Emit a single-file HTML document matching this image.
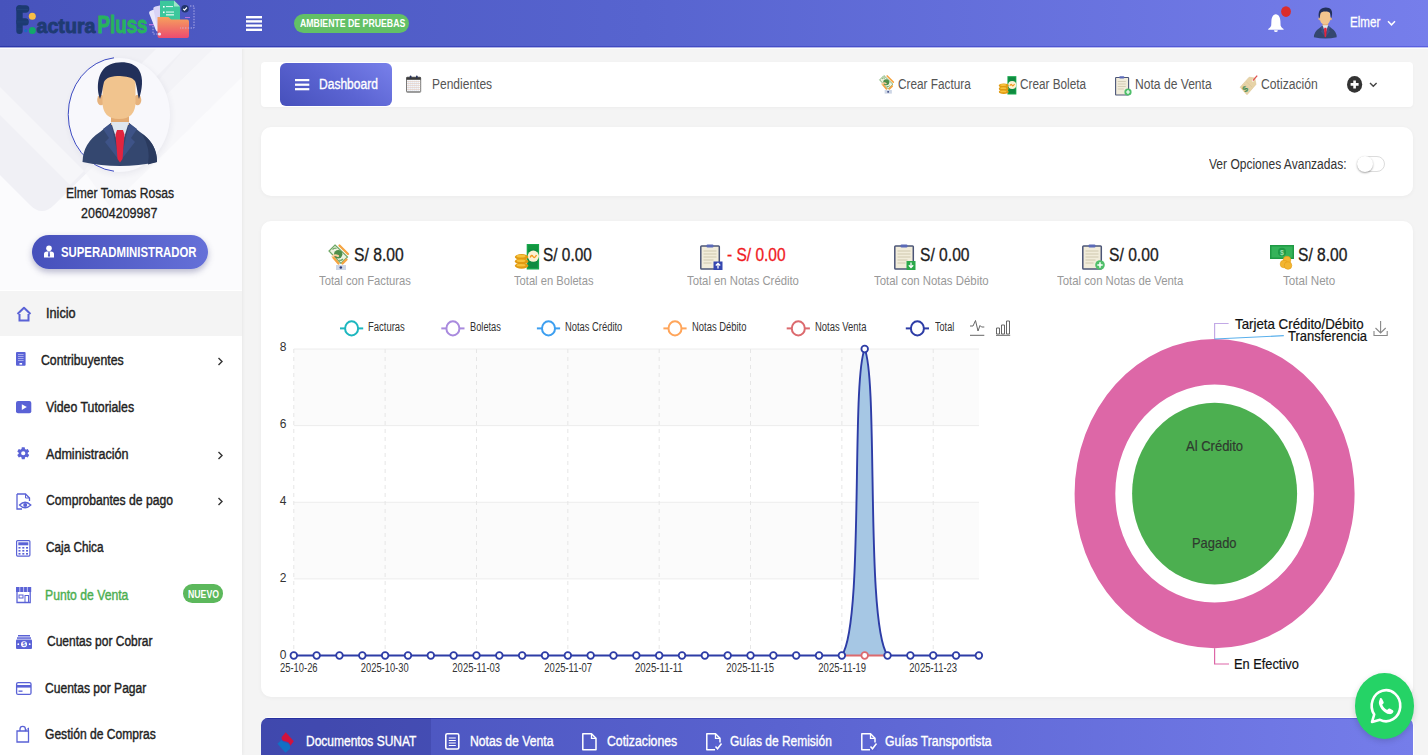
<!DOCTYPE html><html><head><meta charset="utf-8"><style>*{box-sizing:border-box;margin:0;padding:0}
html,body{width:1428px;height:755px;overflow:hidden}
body{position:relative;background:#f4f4f4;font-family:"Liberation Sans",sans-serif;color:#333}
.abs{position:absolute}
.t{position:absolute;white-space:nowrap}
svg{position:absolute;overflow:visible}
</style></head><body>
<div class="abs" style="left:0;top:0;width:1428px;height:46px;background:linear-gradient(90deg,#4753bc 0%,#5764cf 45%,#767eeb 100%)"></div>
<svg style="left:14px;top:0" width="184" height="40" viewBox="0 0 184 40">
  <rect x="2.3" y="5.3" width="6.4" height="28.7" rx="3" fill="#1c3a72"/>
  <rect x="2.3" y="5.3" width="13" height="7.4" rx="3.6" fill="#1c3a72"/>
  <rect x="2.3" y="18.3" width="12.5" height="7.2" rx="3.5" fill="#1c3a72"/>
  <path d="M3 9.5h11M3 22h11M3 29h5" stroke="#24437e" stroke-width="0.8"/>
  <circle cx="18.3" cy="16.2" r="3.5" fill="#f8bd45"/>
  <circle cx="11.8" cy="30.7" r="1.6" fill="#1a6ac0"/>
  <circle cx="18.3" cy="30.6" r="3.5" fill="#12a86a"/>
  <text x="22.5" y="32.6" font-family="Liberation Sans" font-weight="bold" font-size="21" fill="#1f3b73" stroke="#1f3b73" stroke-width="0.9" textLength="59" lengthAdjust="spacingAndGlyphs">actura</text>
  <text x="83.5" y="32.6" font-family="Liberation Sans" font-weight="bold" font-size="24.5" fill="#27b35e" stroke="#27b35e" stroke-width="0.9" textLength="50" lengthAdjust="spacingAndGlyphs">Pluss</text>
  <rect x="135" y="24" width="7" height="1.3" fill="#b873e0"/>
  <rect x="138" y="8" width="16" height="22" rx="2.5" fill="#e9e6fb" transform="rotate(-22 146 19)"/>
  <rect x="141" y="5" width="16" height="22" rx="2.5" fill="#d9d3f6" transform="rotate(-12 149 16)"/>
  <path d="M146 0.5 h14 l6 6 v14 h-20z" fill="#3cc79c"/>
  <path d="M160 0.5 v6 h6z" fill="#9fe3c8"/>
  <rect x="149" y="6" width="1.6" height="1.6" fill="#fff"/><rect x="152" y="6" width="7" height="1.1" fill="#d6f5ec"/>
  <rect x="149" y="11.5" width="1.6" height="1.6" fill="#fff"/><rect x="152" y="11.5" width="8" height="1.1" fill="#d6f5ec"/><rect x="152" y="14" width="8" height="1.6" fill="#bfeede"/>
  <defs><linearGradient id="fold" x1="0" y1="0" x2="0" y2="1"><stop offset="0" stop-color="#f6a15c"/><stop offset="1" stop-color="#ec4b70"/></linearGradient></defs>
  <path d="M143.5 17 h11 l2.5 2.5 h16 a2 2 0 0 1 2 2 v14.5 a2 2 0 0 1 -2 2 h-27.5 a2 2 0 0 1 -2 -2z" fill="url(#fold)"/>
  <circle cx="171" cy="8.7" r="3.8" fill="#22356b"/>
  <path d="M169.2 8.8 l1.3 1.4 l2.4 -2.7" stroke="#fff" stroke-width="1.2" fill="none"/>
  <path d="M176 6 h4 v22 h-14" stroke="#c9c3f0" stroke-width="0.8" stroke-dasharray="1.4 1.4" fill="none"/>
  <path d="M139 26 v8 h6" stroke="#c9c3f0" stroke-width="0.8" stroke-dasharray="1.4 1.4" fill="none"/>
  <circle cx="145.5" cy="34" r="1.6" fill="#e8e5fb"/>
  <rect x="171" y="17" width="5" height="1" fill="#b873e0"/>
 </svg>
<svg style="left:246px;top:15.8px" width="16" height="16"><rect y="0" width="16" height="2.4" fill="#fff"/><rect y="4.2" width="16" height="2.4" fill="#fff"/><rect y="8.4" width="16" height="2.4" fill="#fff"/><rect y="12.6" width="16" height="2.4" fill="#fff"/></svg>
<div class="abs" style="left:294px;top:14px;width:115px;height:19px;border-radius:10px;background:#62c066"></div>
<div class="t" style="left:299.50px;top:18.41px;font-size:10.5px;line-height:10.5px;color:#fff;font-weight:bold;transform:scaleX(0.8318);transform-origin:0 0;">AMBIENTE DE PRUEBAS</div>
<svg style="left:0;top:0" width="1428" height="47" viewBox="0 0 1428 47"><path d="M1275.8 14.2 C1272.8 14.5 1271.6 17.5 1271.4 21 L1271.2 25.5 C1270.8 27 1269.5 28.2 1268.2 29 L1268.2 29.8 H1283.6 L1283.6 29 C1282.2 28.2 1281 27 1280.6 25.5 L1280.4 21 C1280.2 17.5 1279 14.5 1275.8 14.2Z" fill="#fff"/><path d="M1274 30.2 a1.9 1.9 0 0 0 3.8 0z" fill="#fff"/><ellipse cx="1286" cy="11.6" rx="4.9" ry="5.3" fill="#dc2c2a"/></svg>
<svg style="left:0;top:0" width="1428" height="47" viewBox="0 0 1428 47"><g transform="translate(1307.015 3.875) scale(0.306 0.298)"><path d="M22.5 112 Q23 93 40 82 L51 73 L69 73 L80 82 Q97 93 97 112 Q60 120 22.5 112Z" fill="#34476f"/><path d="M51 73 L43 79 L49 88 L45 92 L59 110 Z" fill="#3e5387"/><path d="M69 73 L77 79 L71 88 L75 92 L61 110 Z" fill="#3e5387"/><rect x="51" y="58" width="18" height="17" fill="#e2aa72"/><path d="M51 72 L69 72 L60 100 Z" fill="#dfe7ef"/><path d="M57 80 L63 80 L64.5 84.5 L62.5 109 L60 112.5 L57.5 109 L55.5 84.5 Z" fill="#e2243f"/><ellipse cx="41" cy="50" rx="3.8" ry="5.2" fill="#e6b27c"/><ellipse cx="77.5" cy="50" rx="3.8" ry="5.2" fill="#e6b27c"/><path d="M42.5 32 Q42.5 20 59 20 Q75.5 20 75.5 32 L75.5 52 Q75.5 69 59 69 Q42.5 69 42.5 52 Z" fill="#f1c48e"/><path d="M40 49 C36 38 37 20 50 14.5 C60 10.5 74 12 79 20 C84 28 82 40 79 49 C77.5 44 77 36 75 31 C72 27 66 26.5 60 26 C52 26 46 27.5 44 32 C42.5 37 42.3 44 40 49Z" fill="#22305a"/></g></svg>
<div class="t" style="left:1349.70px;top:15.45px;font-size:14px;line-height:14px;color:#fff;transform:scaleX(0.8288);transform-origin:0 0;-webkit-text-stroke:0.3px #fff;">Elmer</div>
<svg style="left:1387px;top:20px" width="9" height="7"><path d="M1 1.2 L4.5 4.8 L8 1.2" stroke="#fff" stroke-width="1.5" fill="none"/></svg>
<div class="abs" style="left:0;top:47px;width:242px;height:708px;background:#fff;box-shadow:1px 0 3px rgba(0,0,0,0.05)"></div>
<svg style="left:0;top:47px" width="242" height="243" viewBox="0 0 242 243">
  <rect width="242" height="243" fill="#fbfbfd"/>
  <path d="M0 0 H215 L54 158 Q42 170 30 158 L0 128 Z" fill="#f0f0f5"/>
  <path d="M0 40 L84 124 L70 138 L0 68 Z" fill="#f6f6f9"/>
  <path d="M158 0 H186 L84 102 L70 88 Z" fill="#f6f6fa"/>
  <path d="M186 0 H242 V30 L110 160 L84 124 Z" fill="#f5f5f9" opacity="0.6"/>
 </svg>
<div class="abs" style="left:68.4px;top:57.5px;width:102px;height:114px;border-radius:50%;background:#f8f8fc;box-shadow:1px 2px 6px rgba(40,40,90,0.07)"></div>
<svg style="left:60px;top:50px" width="120" height="130" viewBox="0 0 120 130">
  
  <path d="M54 7.8 A51 57 0 0 0 54 121.2" stroke="#3d4bc2" stroke-width="1" fill="none"/>
  <path d="M22.5 112 Q23 93 40 82 L51 73 L69 73 L80 82 Q97 93 97 112 Q60 120 22.5 112Z" fill="#34476f"/>
  <path d="M51 73 L43 79 L49 88 L45 92 L59 110 Z" fill="#3e5387"/>
  <path d="M69 73 L77 79 L71 88 L75 92 L61 110 Z" fill="#3e5387"/>
  <path d="M82 84 Q97 94 97 112 L88 114.5 Q91 98 82 84Z" fill="#2a3a5e"/>
  <rect x="51" y="58" width="18" height="17" fill="#e2aa72"/>
  <path d="M51 72 L69 72 L60 100 Z" fill="#dfe7ef"/>
  <path d="M57 80 L63 80 L64.5 84.5 L62.5 109 L60 112.5 L57.5 109 L55.5 84.5 Z" fill="#e2243f"/>
  <ellipse cx="41" cy="50" rx="3.8" ry="5.2" fill="#e6b27c"/>
  <ellipse cx="77.5" cy="50" rx="3.8" ry="5.2" fill="#e6b27c"/>
  <path d="M42.5 32 Q42.5 20 59 20 Q75.5 20 75.5 32 L75.5 52 Q75.5 69 59 69 Q42.5 69 42.5 52 Z" fill="#f1c48e"/>
  <path d="M40 49 C36 38 37 20 50 14.5 C60 10.5 74 12 79 20 C84 28 82 40 79 49 C77.5 44 77 36 75 31 C72 27 66 26.5 60 26 C52 26 46 27.5 44 32 C42.5 37 42.3 44 40 49Z" fill="#22305a"/>
 </svg>
<div class="t" style="left:65.80px;top:185.85px;font-size:14px;line-height:14px;color:#222;transform:scaleX(0.8648);transform-origin:0 0;-webkit-text-stroke:0.3px #222;">Elmer Tomas Rosas</div>
<div class="t" style="left:81.30px;top:206.45px;font-size:14px;line-height:14px;color:#222;transform:scaleX(0.8920);transform-origin:0 0;-webkit-text-stroke:0.3px #222;">20604209987</div>
<div class="abs" style="left:32px;top:235px;width:176px;height:34px;border-radius:17px;background:linear-gradient(90deg,#4650bb,#6570d8);box-shadow:0 3px 6px rgba(60,60,120,0.35)"></div>
<svg style="left:43px;top:245px" width="12" height="13" viewBox="0 0 12 13"><circle cx="6" cy="3.2" r="2.8" fill="#fff"/><path d="M1 12.5 V9 Q1 6.5 4 6.5 H8 Q11 6.5 11 9 V12.5Z" fill="#fff"/><path d="M5.3 7 h1.4 l0.4 4 l-1.1 1 l-1.1 -1z" fill="#5560c8"/></svg>
<div class="t" style="left:60.60px;top:245.05px;font-size:14px;line-height:14px;color:#fff;font-weight:bold;transform:scaleX(0.8103);transform-origin:0 0;">SUPERADMINISTRADOR</div>
<div class="abs" style="left:0;top:290.5px;width:242px;height:45.5px;background:#f4f4f4"></div>
<div class="t" style="left:45.50px;top:306.35px;font-size:14px;line-height:14px;color:#222;transform:scaleX(0.9057);transform-origin:0 0;-webkit-text-stroke:0.4px #222;">Inicio</div>
<div class="t" style="left:40.80px;top:353.15px;font-size:14px;line-height:14px;color:#222;transform:scaleX(0.8772);transform-origin:0 0;-webkit-text-stroke:0.4px #222;">Contribuyentes</div>
<div class="t" style="left:45.50px;top:400.05px;font-size:14px;line-height:14px;color:#222;transform:scaleX(0.8797);transform-origin:0 0;-webkit-text-stroke:0.4px #222;">Video Tutoriales</div>
<div class="t" style="left:45.50px;top:446.95px;font-size:14px;line-height:14px;color:#222;transform:scaleX(0.8985);transform-origin:0 0;-webkit-text-stroke:0.4px #222;">Administración</div>
<div class="t" style="left:45.50px;top:493.25px;font-size:14px;line-height:14px;color:#222;transform:scaleX(0.8679);transform-origin:0 0;-webkit-text-stroke:0.4px #222;">Comprobantes de pago</div>
<div class="t" style="left:45.50px;top:539.65px;font-size:14px;line-height:14px;color:#222;transform:scaleX(0.8397);transform-origin:0 0;-webkit-text-stroke:0.4px #222;">Caja Chica</div>
<div class="t" style="left:45.30px;top:587.55px;font-size:14px;line-height:14px;color:#4cae50;transform:scaleX(0.8710);transform-origin:0 0;-webkit-text-stroke:0.4px #4cae50;">Punto de Venta</div>
<div class="t" style="left:46.60px;top:634.15px;font-size:14px;line-height:14px;color:#222;transform:scaleX(0.8572);transform-origin:0 0;-webkit-text-stroke:0.4px #222;">Cuentas por Cobrar</div>
<div class="t" style="left:45.30px;top:680.65px;font-size:14px;line-height:14px;color:#222;transform:scaleX(0.8620);transform-origin:0 0;-webkit-text-stroke:0.4px #222;">Cuentas por Pagar</div>
<div class="t" style="left:45.30px;top:727.15px;font-size:14px;line-height:14px;color:#222;transform:scaleX(0.8622);transform-origin:0 0;-webkit-text-stroke:0.4px #222;">Gestión de Compras</div>
<svg style="left:217px;top:357.0px" width="7" height="9"><path d="M1.5 1 L5 4.5 L1.5 8" stroke="#333" stroke-width="1.4" fill="none"/></svg>
<svg style="left:217px;top:450.8px" width="7" height="9"><path d="M1.5 1 L5 4.5 L1.5 8" stroke="#333" stroke-width="1.4" fill="none"/></svg>
<svg style="left:217px;top:497.1px" width="7" height="9"><path d="M1.5 1 L5 4.5 L1.5 8" stroke="#333" stroke-width="1.4" fill="none"/></svg>
<svg style="left:15.5px;top:306px" width="16" height="16" viewBox="0 0 16 16"><path d="M1.5 8 L8 1.8 L14.5 8" stroke="#5a62d6" stroke-width="2" fill="none" stroke-linejoin="round"/><path d="M3.5 8 V14.5 H12.5 V8" stroke="#5a62d6" stroke-width="2" fill="none"/></svg>
<svg style="left:15.8px;top:352px" width="10" height="14" viewBox="0 0 10 14"><rect x="0" y="0" width="9.6" height="13.7" rx="1" fill="#5a62d6"/><path d="M2 2.5h5.6M2 4.5h5.6M2 6.5h5.6M2 8.5h5.6" stroke="#b9bdf0" stroke-width="0.8"/><rect x="3.5" y="11" width="2.6" height="1.6" fill="#fff"/></svg>
<svg style="left:15.8px;top:401px" width="16" height="13" viewBox="0 0 16 13"><rect x="0" y="0" width="15.3" height="12.2" rx="2" fill="#5a62d6"/><path d="M5.8 3.2 L10.8 6.1 L5.8 9z" fill="#fff"/></svg>
<svg style="left:15.8px;top:446.4px" width="14.5" height="14.5" viewBox="0 0 24 24"><path fill="#5a62d6" d="M12 15.5A3.5 3.5 0 1 1 12 8.5a3.5 3.5 0 0 1 0 7zm7.43-2.53c.04-.32.07-.64.07-.97s-.03-.66-.07-1l2.11-1.63c.19-.15.24-.42.12-.64l-2-3.46c-.12-.22-.39-.31-.61-.22l-2.49 1c-.52-.39-1.06-.73-1.69-.98l-.37-2.65A.506.506 0 0 0 14 2h-4c-.25 0-.46.18-.5.42l-.37 2.65c-.63.25-1.17.59-1.69.98l-2.49-1c-.22-.09-.49 0-.61.22l-2 3.46c-.13.22-.07.49.12.64L4.57 11c-.04.34-.07.67-.07 1s.03.65.07.97l-2.11 1.66c-.19.15-.25.42-.12.64l2 3.46c.12.22.39.3.61.22l2.49-1.01c.52.4 1.06.74 1.69.99l.37 2.65c.04.24.25.42.5.42h4c.25 0 .46-.18.5-.42l.37-2.65c.63-.26 1.17-.59 1.69-.99l2.49 1.01c.22.08.49 0 .61-.22l2-3.46c.12-.22.07-.49-.12-.64l-2.11-1.66z"/></svg>
<svg style="left:16px;top:493px" width="16" height="17" viewBox="0 0 16 17"><path d="M1 1 H9.5 L13.5 5 V8" stroke="#5a62d6" stroke-width="1.3" fill="none"/><path d="M1 1 V16 H6" stroke="#5a62d6" stroke-width="1.3" fill="none"/><path d="M9.5 1 V5 H13.5" stroke="#5a62d6" stroke-width="1" fill="none"/><path d="M3.5 12 Q9 6.5 14.8 12 Q9 17.5 3.5 12z" stroke="#5a62d6" stroke-width="1.3" fill="#fff"/><circle cx="9.2" cy="12" r="2" fill="#5a62d6"/></svg>
<svg style="left:15.8px;top:539.5px" width="15" height="17" viewBox="0 0 15 17"><rect x="0.6" y="0.6" width="13.3" height="15.5" rx="1" stroke="#5a62d6" stroke-width="1.2" fill="#fff"/><rect x="2.3" y="2.3" width="10" height="3" fill="#5a62d6"/><g fill="#5a62d6"><rect x="2.5" y="7" width="2" height="1.6"/><rect x="6.3" y="7" width="2" height="1.6"/><rect x="10" y="7" width="2" height="1.6"/><rect x="2.5" y="10" width="2" height="1.6"/><rect x="6.3" y="10" width="2" height="1.6"/><rect x="10" y="10" width="2" height="1.6"/><rect x="2.5" y="13" width="2" height="1.6"/><rect x="6.3" y="13" width="2" height="1.6"/><rect x="10" y="13" width="2" height="1.6"/></g></svg>
<svg style="left:15.9px;top:587px" width="16" height="16" viewBox="0 0 16 16"><rect x="0" y="0" width="15.2" height="5" fill="#5a62d6"/><path d="M3.8 0v5M7.6 0v5M11.4 0v5" stroke="#c9ccf3" stroke-width="0.9"/><path d="M1 5 V15.5 H14.2 V5" stroke="#5a62d6" stroke-width="1.3" fill="none"/><rect x="3" y="8" width="4" height="3" stroke="#5a62d6" stroke-width="1" fill="none"/><rect x="9" y="8.5" width="3.5" height="7" stroke="#5a62d6" stroke-width="1" fill="none"/></svg>
<svg style="left:16px;top:635px" width="16" height="14" viewBox="0 0 16 14"><rect x="2" y="0" width="12" height="1.5" fill="#5a62d6"/><rect x="1" y="2.3" width="14" height="1.5" fill="#5a62d6"/><rect x="0" y="4.5" width="16" height="9.5" rx="1" fill="#5a62d6"/><circle cx="8" cy="9.2" r="3" fill="#fff"/><text x="8" y="11.3" font-size="5.5" font-family="Liberation Sans" font-weight="bold" text-anchor="middle" fill="#5a62d6">$</text><circle cx="2.3" cy="9.2" r="0.9" fill="#fff"/><circle cx="13.7" cy="9.2" r="0.9" fill="#fff"/></svg>
<svg style="left:16px;top:682px" width="16" height="14" viewBox="0 0 16 14"><rect x="0.6" y="0.6" width="14.4" height="11.8" rx="1.5" stroke="#5a62d6" stroke-width="1.3" fill="#fff"/><rect x="0.6" y="3" width="14.4" height="2.6" fill="#5a62d6"/><rect x="2.5" y="8.5" width="4" height="1.3" fill="#5a62d6"/></svg>
<svg style="left:16px;top:726px" width="14" height="17" viewBox="0 0 14 17"><path d="M1 5 H12.5 V16 H1z" stroke="#5a62d6" stroke-width="1.3" fill="#fff"/><path d="M4 5 V3 a2.7 2.7 0 0 1 5.4 0 V5" stroke="#5a62d6" stroke-width="1.3" fill="none"/><path d="M9.4 5 L12.5 2 V13" stroke="#5a62d6" stroke-width="1" fill="none"/></svg>
<div class="abs" style="left:182.6px;top:584.2px;width:40.4px;height:18.4px;border-radius:9.2px;background:#5cb85c"></div>
<div class="t" style="left:187.50px;top:588.81px;font-size:10.5px;line-height:10.5px;color:#fff;font-weight:bold;transform:scaleX(0.8302);transform-origin:0 0;">NUEVO</div>
<div class="abs" style="left:261px;top:62px;width:1152px;height:44.5px;background:#fff;border-radius:4px;box-shadow:0 1px 3px rgba(0,0,0,0.03)"></div>
<div class="abs" style="left:261px;top:127px;width:1152px;height:69px;background:#fff;border-radius:10px;box-shadow:0 1px 4px rgba(0,0,0,0.04)"></div>
<div class="abs" style="left:261px;top:221px;width:1152px;height:476px;background:#fff;border-radius:10px;box-shadow:0 1px 4px rgba(0,0,0,0.04)"></div>
<div class="abs" style="left:280px;top:62.5px;width:112.4px;height:43.7px;border-radius:6px;background:linear-gradient(35deg,#4650bb 0%,#5b64d2 50%,#7880ea 100%)"></div>
<svg style="left:295px;top:79px" width="15" height="12"><rect y="0" width="14.3" height="2.2" fill="#fff"/><rect y="4.6" width="14.3" height="2.2" fill="#fff"/><rect y="9.1" width="14.3" height="2.2" fill="#fff"/></svg>
<div class="t" style="left:319.00px;top:77.05px;font-size:14px;line-height:14px;color:#fff;transform:scaleX(0.8600);transform-origin:0 0;-webkit-text-stroke:0.35px #fff;">Dashboard</div>
<svg style="left:0;top:0" width="1428" height="100" viewBox="0 0 1428 100"><rect x="406.5" y="77.2" width="14.2" height="15" rx="0.8" fill="#fdfdfb" stroke="#6a6a6a" stroke-width="0.9"/><rect x="406.5" y="77.2" width="14.2" height="2.6" fill="#3a3a3a"/><g stroke-width="0.6"><path d="M408.2 80.5v11M410.2 80.5v11M412.2 80.5v11M414.2 80.5v11M416.2 80.5v11M418.2 80.5v11" stroke="#c9cfe6"/><path d="M407 81.5h13.2M407 83.5h13.2M407 85.5h13.2M407 87.5h13.2M407 89.5h13.2" stroke="#e4c9bd"/></g><rect x="409.8" y="75.4" width="1.6" height="2.8" rx="0.8" fill="#28325a"/><rect x="416" y="75.4" width="1.6" height="2.8" rx="0.8" fill="#28325a"/><rect x="406.5" y="91" width="14.2" height="1.3" fill="#9a9a9a"/></svg>
<div class="t" style="left:431.70px;top:77.05px;font-size:14px;line-height:14px;color:#555;transform:scaleX(0.8579);transform-origin:0 0;">Pendientes</div>
<svg style="left:875.6px;top:72.4px" width="20.2" height="24.5" viewBox="0 0 28 34"><path d="M11 5 L23.5 17 L17 23.5 L5 11Z" fill="#eef3e2" stroke="#6fa866" stroke-width="1.2"/><circle cx="14.2" cy="14.2" r="4.2" fill="#4f8f4a"/><path d="M8.5 9.5 q2 -2 4 -1 M19 19 q-2 2 -4 1" stroke="#6fa866" stroke-width="1.3" fill="none"/><path d="M15.5 5.5 L24 14" stroke="#f5a442" stroke-width="2.3" stroke-linecap="round"/><path d="M9 17 L14.5 23.5 M22.5 19.5 L18.5 23.5" stroke="#f5a442" stroke-width="2.4" stroke-linecap="round"/><path d="M8.5 16.5 Q11 14.5 14 16" stroke="#fbd1a0" stroke-width="2" stroke-linecap="round"/><rect x="12" y="25" width="10" height="5" fill="#cdd6e6"/><circle cx="16.8" cy="27.5" r="1.3" fill="#2e3c7a"/></svg>
<div class="t" style="left:897.70px;top:77.05px;font-size:14px;line-height:14px;color:#555;transform:scaleX(0.8430);transform-origin:0 0;">Crear Factura</div>
<svg style="left:999px;top:75.6px" width="18" height="19" viewBox="0 0 25 26"><rect x="11.7" y="0" width="12.4" height="25.5" fill="#17a64c"/><rect x="13" y="1.5" width="9.8" height="22.5" fill="#0f8a40"/><circle cx="18.3" cy="12.2" r="5.6" fill="#fbf1d2"/><path d="M15.2 13.5 Q16.5 10 18 12.5 T21.5 11" stroke="#f39a1e" stroke-width="1.6" fill="none"/><g fill="#e09a12"><ellipse cx="6.6" cy="13" rx="6.8" ry="2.9"/><ellipse cx="6.6" cy="17.4" rx="6.8" ry="2.9"/><ellipse cx="6.6" cy="21.8" rx="6.8" ry="2.9"/></g><g fill="#f7c23c"><ellipse cx="6" cy="12.2" rx="4.5" ry="1.4"/><ellipse cx="6" cy="16.8" rx="4.5" ry="1.2"/><ellipse cx="6" cy="21.2" rx="4.5" ry="1.2"/></g></svg>
<div class="t" style="left:1019.60px;top:77.05px;font-size:14px;line-height:14px;color:#555;transform:scaleX(0.8397);transform-origin:0 0;">Crear Boleta</div>
<svg style="left:1114.6px;top:75.7px" width="17" height="20" viewBox="0 0 17 20"><rect x="0.6" y="1.5" width="13" height="17.5" rx="0.6" fill="#f1ecda" stroke="#4b5577" stroke-width="1.1"/><rect x="4.3" y="0.2" width="5" height="2.3" rx="0.8" fill="#5b6ab8"/><g stroke="#c8c2a8" stroke-width="0.7"><path d="M2.8 5.5h8M2.8 8h8M2.8 10.5h8M2.8 13h6"/></g><circle cx="13" cy="16" r="3.6" fill="#4fbf6a"/><path d="M11 16h4M13 14v4" stroke="#fff" stroke-width="1.2"/></svg>
<div class="t" style="left:1134.70px;top:76.85px;font-size:14px;line-height:14px;color:#555;transform:scaleX(0.8643);transform-origin:0 0;">Nota de Venta</div>
<svg style="left:0;top:0" width="1428" height="100" viewBox="0 0 1428 100"><path d="M1249.1 77.2 L1254.8 77.9 L1256 84.4 L1247 94.8 L1240.1 87.2Z" fill="#e7d3a7" stroke="#d9c08c" stroke-width="0.5"/><path d="M1246 81.5 L1252 87 M1244 84 L1250 89.5" stroke="#d6c195" stroke-width="0.5"/><circle cx="1252.9" cy="80.6" r="1.1" fill="#fff"/><path d="M1252.9 80.6 L1257.2 75.6" stroke="#e05050" stroke-width="1.3"/><text x="1245.3" y="92" font-size="8.5" font-family="Liberation Sans" font-weight="bold" text-anchor="middle" fill="#3f8a4f" transform="rotate(-40 1245.3 89.2)">$</text></svg>
<div class="t" style="left:1261.00px;top:76.85px;font-size:14px;line-height:14px;color:#555;transform:scaleX(0.8689);transform-origin:0 0;">Cotización</div>
<svg style="left:1346.5px;top:75.7px" width="16" height="17" viewBox="0 0 16 17"><ellipse cx="7.6" cy="8.4" rx="7.6" ry="8.4" fill="#333"/><path d="M3.6 8.4h8M7.6 4.4v8" stroke="#fff" stroke-width="2.6"/></svg>
<svg style="left:1368.5px;top:82px" width="9" height="6"><path d="M1 1 L4.3 4.3 L7.6 1" stroke="#444" stroke-width="1.4" fill="none"/></svg>
<div class="t" style="left:1209.00px;top:156.75px;font-size:14px;line-height:14px;color:#333;transform:scaleX(0.8590);transform-origin:0 0;">Ver Opciones Avanzadas:</div>
<div class="abs" style="left:1356.7px;top:156.2px;width:28.1px;height:16.1px;border-radius:8px;border:1px solid #dcdcdc;background:#fff"></div>
<div class="abs" style="left:1356.7px;top:156.2px;width:16.1px;height:16.1px;border-radius:50%;background:#fff;box-shadow:0 1px 2px rgba(0,0,0,0.35)"></div>
<div class="t" style="left:353.80px;top:246.59px;font-size:17.5px;line-height:17.5px;color:#1b1b1b;transform:scaleX(0.8962);transform-origin:0 0;-webkit-text-stroke:0.3px #1b1b1b;">S/ 8.00</div>
<div class="t" style="left:319.00px;top:273.50px;font-size:13px;line-height:13px;color:#999;transform:scaleX(0.8662);transform-origin:0 0;">Total con Facturas</div>
<div class="t" style="left:543.00px;top:246.59px;font-size:17.5px;line-height:17.5px;color:#1b1b1b;transform:scaleX(0.8800);transform-origin:0 0;-webkit-text-stroke:0.3px #1b1b1b;">S/ 0.00</div>
<div class="t" style="left:514.00px;top:273.50px;font-size:13px;line-height:13px;color:#999;transform:scaleX(0.8594);transform-origin:0 0;">Total en Boletas</div>
<div class="t" style="left:727.00px;top:246.59px;font-size:17.5px;line-height:17.5px;color:#f0191e;transform:scaleX(0.8844);transform-origin:0 0;-webkit-text-stroke:0.3px #f0191e;">- S/ 0.00</div>
<div class="t" style="left:686.70px;top:273.50px;font-size:13px;line-height:13px;color:#999;transform:scaleX(0.8700);transform-origin:0 0;">Total en Notas Crédito</div>
<div class="t" style="left:920.00px;top:246.59px;font-size:17.5px;line-height:17.5px;color:#1b1b1b;transform:scaleX(0.8926);transform-origin:0 0;-webkit-text-stroke:0.3px #1b1b1b;">S/ 0.00</div>
<div class="t" style="left:874.30px;top:273.50px;font-size:13px;line-height:13px;color:#999;transform:scaleX(0.8769);transform-origin:0 0;">Total con Notas Débito</div>
<div class="t" style="left:1109.00px;top:246.59px;font-size:17.5px;line-height:17.5px;color:#1b1b1b;transform:scaleX(0.8944);transform-origin:0 0;-webkit-text-stroke:0.3px #1b1b1b;">S/ 0.00</div>
<div class="t" style="left:1057.00px;top:273.50px;font-size:13px;line-height:13px;color:#999;transform:scaleX(0.8738);transform-origin:0 0;">Total con Notas de Venta</div>
<div class="t" style="left:1297.60px;top:246.59px;font-size:17.5px;line-height:17.5px;color:#1b1b1b;transform:scaleX(0.8908);transform-origin:0 0;-webkit-text-stroke:0.3px #1b1b1b;">S/ 8.00</div>
<div class="t" style="left:1282.90px;top:273.50px;font-size:13px;line-height:13px;color:#999;transform:scaleX(0.8935);transform-origin:0 0;">Total Neto</div>
<svg style="left:324px;top:240px" width="28" height="34" viewBox="0 0 28 34"><path d="M11 5 L23.5 17 L17 23.5 L5 11Z" fill="#eef3e2" stroke="#6fa866" stroke-width="1.2"/><circle cx="14.2" cy="14.2" r="4.2" fill="#4f8f4a"/><path d="M8.5 9.5 q2 -2 4 -1 M19 19 q-2 2 -4 1" stroke="#6fa866" stroke-width="1.3" fill="none"/><path d="M15.5 5.5 L24 14" stroke="#f5a442" stroke-width="2.3" stroke-linecap="round"/><path d="M9 17 L14.5 23.5 M22.5 19.5 L18.5 23.5" stroke="#f5a442" stroke-width="2.4" stroke-linecap="round"/><path d="M8.5 16.5 Q11 14.5 14 16" stroke="#fbd1a0" stroke-width="2" stroke-linecap="round"/><rect x="12" y="25" width="10" height="5" fill="#cdd6e6"/><circle cx="16.8" cy="27.5" r="1.3" fill="#2e3c7a"/></svg>
<svg style="left:514.7px;top:244px" width="25" height="26" viewBox="0 0 25 26"><rect x="11.7" y="0" width="12.4" height="25.5" fill="#17a64c"/><rect x="13" y="1.5" width="9.8" height="22.5" fill="#0f8a40"/><rect x="13" y="1.5" width="9.8" height="4" fill="#11963f"/><circle cx="18.3" cy="12.2" r="5.6" fill="#fbf1d2"/><path d="M15.2 13.5 Q16.5 10 18 12.5 T21.5 11" stroke="#f39a1e" stroke-width="1.4" fill="none"/><g fill="#e09a12"><ellipse cx="6.6" cy="13" rx="6.8" ry="2.9"/><ellipse cx="6.6" cy="17.4" rx="6.8" ry="2.9"/><ellipse cx="6.6" cy="21.8" rx="6.8" ry="2.9"/></g><g fill="#f7c23c"><ellipse cx="6" cy="12.2" rx="4.5" ry="1.4"/><ellipse cx="6" cy="16.8" rx="4.5" ry="1.2"/><ellipse cx="6" cy="21.2" rx="4.5" ry="1.2"/></g></svg>
<svg style="left:699.8px;top:244.3px" width="23" height="26" viewBox="0 0 23 26"><rect x="0.8" y="2" width="18.5" height="23" rx="0.8" fill="#f1ecda" stroke="#4b5577" stroke-width="1.5"/><rect x="6.5" y="0.4" width="7" height="3.2" rx="1" fill="#5b6ab8"/><g stroke="#cfc8ae" stroke-width="1"><path d="M3.5 7h13M3.5 10h13M3.5 13h13M3.5 16h10M3.5 19h8"/></g><rect x="13.5" y="17.5" width="9" height="8.5" fill="#3446b0"/><path d="M18 24.5v-5M15.8 21.5 L18 19.3 L20.2 21.5" stroke="#fff" stroke-width="1.3" fill="none"/></svg>
<svg style="left:893.8px;top:244.3px" width="23" height="26" viewBox="0 0 23 26"><rect x="0.8" y="2" width="18.5" height="23" rx="0.8" fill="#f1ecda" stroke="#4b5577" stroke-width="1.5"/><rect x="6.5" y="0.4" width="7" height="3.2" rx="1" fill="#5b6ab8"/><g stroke="#cfc8ae" stroke-width="1"><path d="M3.5 7h13M3.5 10h13M3.5 13h13M3.5 16h10M3.5 19h8"/></g><rect x="12.5" y="17" width="9" height="9" fill="#2aa84a"/><path d="M17 18.5v5M14.8 21.3 L17 23.5 L19.2 21.3" stroke="#fff" stroke-width="1.3" fill="none"/></svg>
<svg style="left:1081.7px;top:244.3px" width="23" height="26" viewBox="0 0 23 26"><rect x="0.8" y="2" width="18.5" height="23" rx="0.8" fill="#f1ecda" stroke="#4b5577" stroke-width="1.5"/><rect x="6.5" y="0.4" width="7" height="3.2" rx="1" fill="#5b6ab8"/><g stroke="#cfc8ae" stroke-width="1"><path d="M3.5 7h13M3.5 10h13M3.5 13h13M3.5 16h10M3.5 19h8"/></g><circle cx="18" cy="21" r="4.8" fill="#4fbf6a"/><path d="M15.3 21h5.4M18 18.3v5.4" stroke="#fff" stroke-width="1.5"/></svg>
<svg style="left:1269.8px;top:244.8px" width="25" height="25" viewBox="0 0 25 25"><rect x="0" y="0" width="24" height="14" fill="#1f9a45"/><rect x="1.5" y="1.5" width="21" height="11" fill="#35b35a"/><ellipse cx="12" cy="7" rx="4" ry="4.2" fill="#1f9a45"/><text x="12" y="9.6" font-size="7" font-family="Liberation Sans" font-weight="bold" text-anchor="middle" fill="#9be0ae">$</text><g fill="#f2b531" stroke="#e39a14" stroke-width="0.6"><circle cx="17" cy="15" r="3.8"/><circle cx="14" cy="19" r="3.8"/><circle cx="18" cy="20.5" r="3.8"/></g></svg>
<svg style="left:0;top:0" width="1428" height="755" viewBox="0 0 1428 755">
<rect x="293.8" y="349.0" width="685.2" height="76.62" fill="#fbfbfb"/>
<rect x="293.8" y="502.25" width="685.2" height="76.62" fill="#fbfbfb"/>
<line x1="293.8" y1="349.00" x2="979.0" y2="349.00" stroke="#ececec" stroke-width="1"/>
<line x1="293.8" y1="425.62" x2="979.0" y2="425.62" stroke="#ececec" stroke-width="1"/>
<line x1="293.8" y1="502.25" x2="979.0" y2="502.25" stroke="#ececec" stroke-width="1"/>
<line x1="293.8" y1="578.88" x2="979.0" y2="578.88" stroke="#ececec" stroke-width="1"/>
<line x1="293.80" y1="349.0" x2="293.80" y2="655.5" stroke="#e6e6e6" stroke-width="1" stroke-dasharray="4 4"/>
<line x1="385.14" y1="349.0" x2="385.14" y2="655.5" stroke="#e6e6e6" stroke-width="1" stroke-dasharray="4 4"/>
<line x1="476.49" y1="349.0" x2="476.49" y2="655.5" stroke="#e6e6e6" stroke-width="1" stroke-dasharray="4 4"/>
<line x1="567.83" y1="349.0" x2="567.83" y2="655.5" stroke="#e6e6e6" stroke-width="1" stroke-dasharray="4 4"/>
<line x1="659.18" y1="349.0" x2="659.18" y2="655.5" stroke="#e6e6e6" stroke-width="1" stroke-dasharray="4 4"/>
<line x1="750.52" y1="349.0" x2="750.52" y2="655.5" stroke="#e6e6e6" stroke-width="1" stroke-dasharray="4 4"/>
<line x1="841.86" y1="349.0" x2="841.86" y2="655.5" stroke="#e6e6e6" stroke-width="1" stroke-dasharray="4 4"/>
<line x1="933.21" y1="349.0" x2="933.21" y2="655.5" stroke="#e6e6e6" stroke-width="1" stroke-dasharray="4 4"/>
<path d="M841.86 655.5 C864.26 622.90 850.90 381.90 864.70 349.0 C878.50 381.90 865.14 622.90 887.54 655.5Z" fill="#a6c7e4"/>
<line x1="841.86" y1="655.5" x2="887.54" y2="655.5" stroke="#dc6a6e" stroke-width="2"/>
<path d="M293.80 655.5 L841.86 655.5 C864.26 622.90 850.90 381.90 864.70 349.0 C878.50 381.90 865.14 622.90 887.54 655.5 L979.00 655.5" stroke="#2d3ca6" stroke-width="1.9" fill="none"/>
<circle cx="293.80" cy="655.5" r="3.3" fill="#fff" stroke="#2d3ca6" stroke-width="1.8"/>
<circle cx="316.64" cy="655.5" r="3.3" fill="#fff" stroke="#2d3ca6" stroke-width="1.8"/>
<circle cx="339.47" cy="655.5" r="3.3" fill="#fff" stroke="#2d3ca6" stroke-width="1.8"/>
<circle cx="362.31" cy="655.5" r="3.3" fill="#fff" stroke="#2d3ca6" stroke-width="1.8"/>
<circle cx="385.14" cy="655.5" r="3.3" fill="#fff" stroke="#2d3ca6" stroke-width="1.8"/>
<circle cx="407.98" cy="655.5" r="3.3" fill="#fff" stroke="#2d3ca6" stroke-width="1.8"/>
<circle cx="430.82" cy="655.5" r="3.3" fill="#fff" stroke="#2d3ca6" stroke-width="1.8"/>
<circle cx="453.65" cy="655.5" r="3.3" fill="#fff" stroke="#2d3ca6" stroke-width="1.8"/>
<circle cx="476.49" cy="655.5" r="3.3" fill="#fff" stroke="#2d3ca6" stroke-width="1.8"/>
<circle cx="499.32" cy="655.5" r="3.3" fill="#fff" stroke="#2d3ca6" stroke-width="1.8"/>
<circle cx="522.16" cy="655.5" r="3.3" fill="#fff" stroke="#2d3ca6" stroke-width="1.8"/>
<circle cx="545.00" cy="655.5" r="3.3" fill="#fff" stroke="#2d3ca6" stroke-width="1.8"/>
<circle cx="567.83" cy="655.5" r="3.3" fill="#fff" stroke="#2d3ca6" stroke-width="1.8"/>
<circle cx="590.67" cy="655.5" r="3.3" fill="#fff" stroke="#2d3ca6" stroke-width="1.8"/>
<circle cx="613.50" cy="655.5" r="3.3" fill="#fff" stroke="#2d3ca6" stroke-width="1.8"/>
<circle cx="636.34" cy="655.5" r="3.3" fill="#fff" stroke="#2d3ca6" stroke-width="1.8"/>
<circle cx="659.18" cy="655.5" r="3.3" fill="#fff" stroke="#2d3ca6" stroke-width="1.8"/>
<circle cx="682.01" cy="655.5" r="3.3" fill="#fff" stroke="#2d3ca6" stroke-width="1.8"/>
<circle cx="704.85" cy="655.5" r="3.3" fill="#fff" stroke="#2d3ca6" stroke-width="1.8"/>
<circle cx="727.68" cy="655.5" r="3.3" fill="#fff" stroke="#2d3ca6" stroke-width="1.8"/>
<circle cx="750.52" cy="655.5" r="3.3" fill="#fff" stroke="#2d3ca6" stroke-width="1.8"/>
<circle cx="773.36" cy="655.5" r="3.3" fill="#fff" stroke="#2d3ca6" stroke-width="1.8"/>
<circle cx="796.19" cy="655.5" r="3.3" fill="#fff" stroke="#2d3ca6" stroke-width="1.8"/>
<circle cx="819.03" cy="655.5" r="3.3" fill="#fff" stroke="#2d3ca6" stroke-width="1.8"/>
<circle cx="841.86" cy="655.5" r="3.3" fill="#fff" stroke="#2d3ca6" stroke-width="1.8"/>
<circle cx="864.70" cy="655.5" r="3.3" fill="#fff" stroke="#dc6a6e" stroke-width="1.8"/>
<circle cx="864.70" cy="349.0" r="3.3" fill="#fff" stroke="#2d3ca6" stroke-width="1.8"/>
<circle cx="887.54" cy="655.5" r="3.3" fill="#fff" stroke="#2d3ca6" stroke-width="1.8"/>
<circle cx="910.37" cy="655.5" r="3.3" fill="#fff" stroke="#2d3ca6" stroke-width="1.8"/>
<circle cx="933.21" cy="655.5" r="3.3" fill="#fff" stroke="#2d3ca6" stroke-width="1.8"/>
<circle cx="956.04" cy="655.5" r="3.3" fill="#fff" stroke="#2d3ca6" stroke-width="1.8"/>
<circle cx="978.88" cy="655.5" r="3.3" fill="#fff" stroke="#2d3ca6" stroke-width="1.8"/>
<line x1="340.0" y1="328.4" x2="363.2" y2="328.4" stroke="#1db7bf" stroke-width="2"/>
<ellipse cx="351.6" cy="328.4" rx="6.5" ry="7.1" fill="#fff" stroke="#1db7bf" stroke-width="2"/>
<line x1="441.3" y1="328.4" x2="464.5" y2="328.4" stroke="#a98ade" stroke-width="2"/>
<ellipse cx="452.9" cy="328.4" rx="6.5" ry="7.1" fill="#fff" stroke="#a98ade" stroke-width="2"/>
<line x1="536.9" y1="328.4" x2="560.1" y2="328.4" stroke="#3d9ff0" stroke-width="2"/>
<ellipse cx="548.5" cy="328.4" rx="6.5" ry="7.1" fill="#fff" stroke="#3d9ff0" stroke-width="2"/>
<line x1="663.4" y1="328.4" x2="686.6" y2="328.4" stroke="#ffa55a" stroke-width="2"/>
<ellipse cx="675" cy="328.4" rx="6.5" ry="7.1" fill="#fff" stroke="#ffa55a" stroke-width="2"/>
<line x1="786.7" y1="328.4" x2="809.9" y2="328.4" stroke="#dc6a6e" stroke-width="2"/>
<ellipse cx="798.3" cy="328.4" rx="6.5" ry="7.1" fill="#fff" stroke="#dc6a6e" stroke-width="2"/>
<line x1="905.8" y1="328.4" x2="929.0" y2="328.4" stroke="#2d3ca6" stroke-width="2"/>
<ellipse cx="917.4" cy="328.4" rx="6.5" ry="7.1" fill="#fff" stroke="#2d3ca6" stroke-width="2"/>
<path d="M970 326 L973 326 L975.5 320.5 L978 331 L980 325.5 L981.5 327 L984.3 327" stroke="#666" stroke-width="1" fill="none"/>
<line x1="970" y1="335.3" x2="984.3" y2="335.3" stroke="#666" stroke-width="1"/>
<path d="M996.5 334 v-6 h3 v6z M1001.5 334 v-9 h3 v9z M1006.5 334 v-13 h3 v13z" stroke="#666" stroke-width="1" fill="none"/>
<line x1="996" y1="335.3" x2="1010.2" y2="335.3" stroke="#666" stroke-width="1"/>
<path fill-rule="evenodd" fill="#dd67a7" d="M1074.6 493.6 a140 154.6 0 1 0 280 0 a140 154.6 0 1 0 -280 0z M1115.3 493.6 a99.3 109 0 1 0 198.6 0 a99.3 109 0 1 0 -198.6 0z"/>
<ellipse cx="1214.6" cy="493.6" rx="82.5" ry="90.85" fill="#4caf50"/>
<path d="M1214.6 339 V323.5 H1228.6" stroke="#c2a9e6" stroke-width="1.2" fill="none"/>
<path d="M1214.6 339 L1283.8 335.7" stroke="#5ab0ec" stroke-width="1.2" fill="none"/>
<path d="M1214.6 648.2 V664 H1229" stroke="#dd67a7" stroke-width="1.2" fill="none"/>
<path d="M1380.6 321 V333 M1375.5 328 L1380.6 333 L1385.7 328 M1374 331 V335.5 H1387.2 V331" stroke="#888" stroke-width="1.1" fill="none"/>
</svg>
<div class="t" style="left:368.20px;top:321.34px;font-size:12px;line-height:12px;color:#333;transform:scaleX(0.7883);transform-origin:0 0;">Facturas</div>
<div class="t" style="left:470.30px;top:321.34px;font-size:12px;line-height:12px;color:#333;transform:scaleX(0.7720);transform-origin:0 0;">Boletas</div>
<div class="t" style="left:565.30px;top:321.34px;font-size:12px;line-height:12px;color:#333;transform:scaleX(0.7810);transform-origin:0 0;">Notas Crédito</div>
<div class="t" style="left:692.00px;top:321.34px;font-size:12px;line-height:12px;color:#333;transform:scaleX(0.7842);transform-origin:0 0;">Notas Débito</div>
<div class="t" style="left:815.00px;top:321.34px;font-size:12px;line-height:12px;color:#333;transform:scaleX(0.7862);transform-origin:0 0;">Notas Venta</div>
<div class="t" style="left:934.50px;top:321.34px;font-size:12px;line-height:12px;color:#333;transform:scaleX(0.7575);transform-origin:0 0;">Total</div>
<div class="t" style="left:279.63px;top:341.34px;font-size:12px;line-height:12px;color:#333;transform:scaleX(1.0000);transform-origin:100% 0;">8</div>
<div class="t" style="left:279.63px;top:418.14px;font-size:12px;line-height:12px;color:#333;transform:scaleX(1.0000);transform-origin:100% 0;">6</div>
<div class="t" style="left:279.63px;top:494.94px;font-size:12px;line-height:12px;color:#333;transform:scaleX(1.0000);transform-origin:100% 0;">4</div>
<div class="t" style="left:279.63px;top:571.74px;font-size:12px;line-height:12px;color:#333;transform:scaleX(1.0000);transform-origin:100% 0;">2</div>
<div class="t" style="left:279.63px;top:648.54px;font-size:12px;line-height:12px;color:#333;transform:scaleX(1.0000);transform-origin:100% 0;">0</div>
<div class="t" style="left:280.40px;top:662.24px;font-size:12px;line-height:12px;color:#333;transform:scaleX(0.7827);transform-origin:0 0;">25-10-26</div>
<div class="t" style="left:354.45px;top:662.24px;font-size:12px;line-height:12px;color:#333;transform:scaleX(0.7787);transform-origin:50% 0;">2025-10-30</div>
<div class="t" style="left:446.24px;top:662.24px;font-size:12px;line-height:12px;color:#333;transform:scaleX(0.7901);transform-origin:50% 0;">2025-11-03</div>
<div class="t" style="left:537.58px;top:662.24px;font-size:12px;line-height:12px;color:#333;transform:scaleX(0.7901);transform-origin:50% 0;">2025-11-07</div>
<div class="t" style="left:629.37px;top:662.24px;font-size:12px;line-height:12px;color:#333;transform:scaleX(0.8020);transform-origin:50% 0;">2025-11-11</div>
<div class="t" style="left:720.27px;top:662.24px;font-size:12px;line-height:12px;color:#333;transform:scaleX(0.7901);transform-origin:50% 0;">2025-11-15</div>
<div class="t" style="left:811.62px;top:662.24px;font-size:12px;line-height:12px;color:#333;transform:scaleX(0.7901);transform-origin:50% 0;">2025-11-19</div>
<div class="t" style="left:902.96px;top:662.24px;font-size:12px;line-height:12px;color:#333;transform:scaleX(0.7901);transform-origin:50% 0;">2025-11-23</div>
<div class="t" style="left:1186.20px;top:438.73px;font-size:14.5px;line-height:14.5px;color:#2f3a2f;transform:scaleX(0.8969);transform-origin:0 0;-webkit-text-stroke:0.2px #2f3a2f;">Al Crédito</div>
<div class="t" style="left:1192.40px;top:536.03px;font-size:14.5px;line-height:14.5px;color:#2f3a2f;transform:scaleX(0.8901);transform-origin:0 0;-webkit-text-stroke:0.2px #2f3a2f;">Pagado</div>
<div class="t" style="left:1235.00px;top:317.23px;font-size:14.5px;line-height:14.5px;color:#111;transform:scaleX(0.9170);transform-origin:0 0;-webkit-text-stroke:0.2px #111;">Tarjeta Crédito/Débito</div>
<div class="t" style="left:1288.00px;top:329.43px;font-size:14.5px;line-height:14.5px;color:#111;transform:scaleX(0.8966);transform-origin:0 0;-webkit-text-stroke:0.2px #111;">Transferencia</div>
<div class="t" style="left:1233.50px;top:657.13px;font-size:14.5px;line-height:14.5px;color:#111;transform:scaleX(0.8835);transform-origin:0 0;-webkit-text-stroke:0.2px #111;">En Efectivo</div>
<div class="abs" style="left:260.5px;top:716.5px;width:1153px;height:42px;border-radius:8px 8px 0 0;background:#fdfdfd"></div>
<div class="abs" style="left:261.3px;top:718px;width:1151.7px;height:40px;border-radius:7px 7px 0 0;background:linear-gradient(90deg,#4852bb 0%,#5a63d0 45%,#757dea 100%);overflow:hidden"><div class="abs" style="left:0;top:0;width:170px;height:40px;background:rgba(30,30,110,0.18)"></div><div class="abs" style="left:0;top:0;width:1152px;height:1px;background:linear-gradient(90deg,rgba(20,30,150,0.6),rgba(60,60,200,0.35))"></div></div>
<svg style="left:0;top:0" width="1428" height="755" viewBox="0 0 1428 755"><path d="M285.7 732.2 L293.8 741.3 L290.3 745.7 Q289.5 741.5 285 741.2 Q281.2 740.5 281.6 737.2 Z" fill="#d2123c"/><path d="M281.3 740 Q283 742.6 286.5 742.8 Q290.6 744 290.1 748.7 L285.5 752.8 L277.4 743.7 Z" fill="#1170c4"/></svg>
<div class="t" style="left:306.00px;top:734.15px;font-size:14px;line-height:14px;color:#fff;transform:scaleX(0.8565);transform-origin:0 0;-webkit-text-stroke:0.35px #fff;">Documentos SUNAT</div>
<svg style="left:445px;top:733px" width="15" height="17" viewBox="0 0 15 17"><rect x="0.8" y="0.8" width="13" height="15.2" rx="1.5" stroke="#fff" stroke-width="1.6" fill="none"/><path d="M3.8 5h7M3.8 7.5h7M3.8 10h7M3.8 12.5h7" stroke="#fff" stroke-width="1.1"/></svg>
<div class="t" style="left:470.00px;top:734.15px;font-size:14px;line-height:14px;color:#fff;transform:scaleX(0.8722);transform-origin:0 0;-webkit-text-stroke:0.35px #fff;">Notas de Venta</div>
<svg style="left:582.3px;top:733px" width="16" height="18" viewBox="0 0 16 18"><path d="M0.8 0.8 H9.5 L14 5.3 V16.8 H0.8z" stroke="#fff" stroke-width="1.5" fill="none" stroke-linejoin="round"/><path d="M9.5 0.8 V5.3 H14" stroke="#fff" stroke-width="1.3" fill="none"/></svg>
<div class="t" style="left:607.00px;top:734.15px;font-size:14px;line-height:14px;color:#fff;transform:scaleX(0.8758);transform-origin:0 0;-webkit-text-stroke:0.35px #fff;">Cotizaciones</div>
<svg style="left:706.2px;top:733px" width="16" height="18" viewBox="0 0 16 18"><path d="M0.8 0.8 H9.5 L14 5.3 V16.8 H0.8z" stroke="#fff" stroke-width="1.5" fill="none" stroke-linejoin="round"/><path d="M9.5 0.8 V5.3 H14" stroke="#fff" stroke-width="1.3" fill="none"/><rect x="9" y="9.5" width="7" height="8.5" fill="#5a62d0"/><path d="M9.5 13.5 L11.5 15.8 L15.5 10.5" stroke="#fff" stroke-width="1.5" fill="none"/></svg>
<div class="t" style="left:730.20px;top:734.15px;font-size:14px;line-height:14px;color:#fff;transform:scaleX(0.8551);transform-origin:0 0;-webkit-text-stroke:0.35px #fff;">Guías de Remisión</div>
<svg style="left:861.2px;top:733px" width="16" height="18" viewBox="0 0 16 18"><path d="M0.8 0.8 H9.5 L14 5.3 V16.8 H0.8z" stroke="#fff" stroke-width="1.5" fill="none" stroke-linejoin="round"/><path d="M9.5 0.8 V5.3 H14" stroke="#fff" stroke-width="1.3" fill="none"/><rect x="9" y="9.5" width="7" height="8.5" fill="#5a62d0"/><path d="M9.5 13.5 L11.5 15.8 L15.5 10.5" stroke="#fff" stroke-width="1.5" fill="none"/></svg>
<div class="t" style="left:885.00px;top:734.15px;font-size:14px;line-height:14px;color:#fff;transform:scaleX(0.8726);transform-origin:0 0;-webkit-text-stroke:0.35px #fff;">Guías Transportista</div>
<div class="abs" style="left:1354.9px;top:673.3px;width:59.4px;height:65.4px;border-radius:50%;background:#25d366;box-shadow:0 2px 6px rgba(0,0,0,0.15)"></div>
<svg style="left:1369px;top:689px" width="32" height="35" viewBox="0 0 32 35"><path d="M3 33 L5.2 25.5 A14.3 15.5 0 1 1 11 30.8z" stroke="#fff" stroke-width="2.6" fill="none" stroke-linejoin="round"/><path d="M10.5 9.5 c1-.6 2-.6 2.5.3 l1.6 3.3 c.3.7 0 1.3-.6 1.8 l-.8.7 c.9 2.3 2.7 4.3 5 5.4 l.8-.9 c.5-.6 1.2-.8 1.8-.5 l3 1.6 c.8.4.8 1.4.2 2.3 c-.9 1.3-2.4 2-4 1.6 c-4.6-1.1-8.6-5.2-10-10.2 c-.4-1.7.3-4.2 1.4-5.4z" fill="#fff"/></svg>
<div class="abs" style="left:0;top:46px;width:1428px;height:1px;background:linear-gradient(90deg,#2c38aa,#5a60e0)"></div>
<div class="abs" style="left:0;top:47px;width:1428px;height:1px;background:linear-gradient(90deg,#a4a9dc,#c0c3f2)"></div>
<div class="abs" style="left:0;top:48px;width:1428px;height:1px;background:#fdfdfd"></div>
</body></html>
